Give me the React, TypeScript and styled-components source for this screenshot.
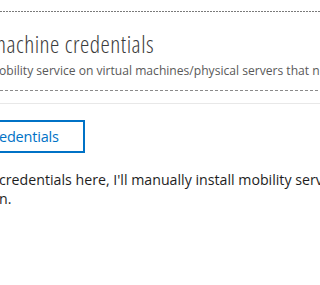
import styled, { createGlobalStyle } from 'styled-components';

const GlobalStyle = createGlobalStyle`
  html, body {
    margin: 0;
    padding: 0;
    background: #fff;
    overflow: hidden;
  }
  body {
    font-family: "Open Sans", "Noto Sans", sans-serif;
  }
`;

const Blade = styled.div`
  width: 320px;
  height: 285px;
  overflow: hidden;
  display: flex;
  flex-direction: column;
  padding-top: 11px;
  box-sizing: border-box;
`;

const Rule = styled.div<{ $color: string; $dash: number; $gap: number; $space?: number }>`
  height: 1px;
  flex: none;
  margin-top: ${p => p.$space ?? 0}px;
  background: repeating-linear-gradient(
    to right,
    ${p => p.$color} 0 ${p => p.$dash}px,
    transparent ${p => p.$dash}px ${p => p.$dash + p.$gap}px
  );
`;

const Divider = styled.div`
  height: 1px;
  margin-top: 12px;
  background: #e8e8e8;
  flex: none;
`;

const Title = styled.h1`
  margin: 17px 0 0 -9px;
  font-size: 23.5px;
  font-weight: 300;
  font-stretch: 75%;
  letter-spacing: 0.5px;
  line-height: 30px;
  color: #3b3b3b;
  white-space: nowrap;
`;

const Subtitle = styled.p`
  margin: 3px 0 0 -1px;
  font-size: 12.1px;
  line-height: 18px;
  color: #595959;
  white-space: nowrap;
`;

const Section = styled.div`
  padding: 16px 0 0;
  display: flex;
  flex-direction: column;
  align-items: flex-start;
`;

const OutlineButton = styled.button`
  margin-left: -3px;
  width: 88px;
  height: 33px;
  padding: 0;
  border: 2px solid #0072c6;
  background: #fff;
  color: #0072c6;
  font-family: inherit;
  font-size: 14.5px;
  letter-spacing: -0.2px;
  text-align: left;
  cursor: pointer;
`;

const Note = styled.p`
  margin: 17px 0 0 -1px;
  font-size: 14.2px;
  line-height: 19px;
  color: #1e1e1e;
  white-space: nowrap;
`;

export default function App() {
  return (
    <>
      <GlobalStyle />
      <Blade>
        <Rule $color="#7a7a7a" $dash={2} $gap={1} />
        <Title>machine credentials</Title>
        <Subtitle>obility service on virtual machines/physical servers that need</Subtitle>
        <Rule $color="#8a8a8a" $dash={3} $gap={2} $space={10} />
        <Divider />
        <Section>
          <OutlineButton>edentials</OutlineButton>
          <Note>
            credentials here, I'll manually install mobility service
            <br />
            n.
          </Note>
        </Section>
      </Blade>
    </>
  );
}
